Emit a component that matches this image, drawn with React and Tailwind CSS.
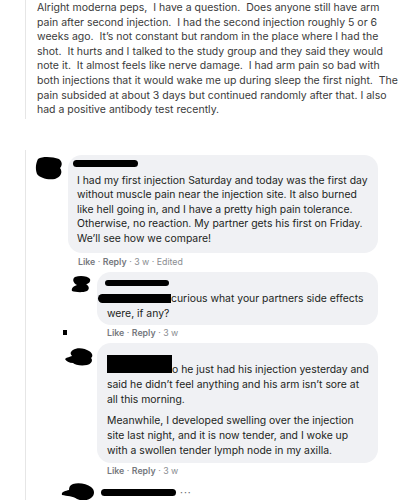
import React from "react";

const font = { fontFamily: "Inter, 'Liberation Sans', sans-serif" };

function Blob({ w, h, d }) {
  return (
    <svg width={w} height={h} viewBox={`0 0 ${w} ${h}`} className="block">
      <path d={d} fill="#000" />
    </svg>
  );
}

function Meta({ edited }) {
  return (
    <div className="text-[8.8px] leading-[12px] text-[#8a8d91] pl-[10px]">
      <span className="font-semibold text-[#75787d]">Like</span>
      <span> · </span>
      <span className="font-semibold text-[#75787d]">Reply</span>
      <span> · 3 w</span>
      {edited && <span> · Edited</span>}
    </div>
  );
}

export default function App() {
  return (
    <div className="w-[409px] h-[500px] bg-white overflow-hidden" style={font}>
      {/* post */}
      <div className="ml-[25px] border-l border-[#e6e6e6] h-[119px] pl-[11px] pt-[1px] text-[10.5px] leading-[14.6px] text-[#3a3a3a]">
        <div className="whitespace-pre">Alright moderna peps,  I have a question.  Does anyone still have arm</div>
        <div className="whitespace-pre">pain after second injection.  I had the second injection roughly 5 or 6</div>
        <div className="whitespace-pre">weeks ago.  It’s not constant but random in the place where I had the</div>
        <div className="whitespace-pre">shot.  It hurts and I talked to the study group and they said they would</div>
        <div className="whitespace-pre">note it.  It almost feels like nerve damage.  I had arm pain so bad with</div>
        <div className="whitespace-pre">both injections that it would wake me up during sleep the first night.  The</div>
        <div className="whitespace-pre">pain subsided at about 3 days but continued randomly after that. I also</div>
        <div className="whitespace-pre">had a positive antibody test recently.</div>
      </div>

      {/* comments */}
      <div className="mt-[31px] ml-[25px] border-l border-[#e6e6e6] h-[350px] pt-[5px]">
        {/* comment 1 */}
        <div className="flex">
          <div className="w-[42px] pl-[9px] pt-[1px]">
            <Blob w={28} h={24} d="M3 3 C8 0 18 1 24 3 C28 6 27 10 25 12 C28 16 26 21 20 23 C12 24 5 22 2 18 C0 12 1 7 3 3 Z" />
          </div>
          <div>
            <div className="w-[310px] bg-[#f0f1f4] rounded-[14px] pl-[9px] pr-[8px] pt-[5px] pb-[7px] text-[10.4px] leading-[14.4px] text-[#1c1e21]">
              <div className="h-[12px] flex items-start">
                <div className="ml-[-4px] w-[65px] h-[7px] bg-black rounded-full" />
              </div>
              <div className="mt-[2px]">
                <div className="whitespace-pre">I had my first injection Saturday and today was the first day</div>
                <div className="whitespace-pre">without muscle pain near the injection site. It also burned</div>
                <div className="whitespace-pre">like hell going in, and I have a pretty high pain tolerance.</div>
                <div className="whitespace-pre">Otherwise, no reaction. My partner gets his first on Friday.</div>
                <div className="whitespace-pre">We’ll see how we compare!</div>
              </div>
            </div>
            <div className="mt-[3px]">
              <Meta edited />
            </div>
          </div>
        </div>

        {/* reply 1 */}
        <div className="flex mt-[4px]">
          <div className="w-[71px] flex flex-col items-end pr-[6px] pt-[3px]">
            <Blob w={20} h={18} d="M4 2 C9 0 17 1 19 4 C20 7 17 9 15 9 C18 11 19 14 16 16 C11 18 4 17 1 16 C0 13 3 11 6 10 C2 8 1 4 4 2 Z" />
            <div className="mt-[37px] mr-[24px] w-[4px] h-[5px] bg-black" />
          </div>
          <div>
            <div className="w-[281px] bg-[#f0f1f4] rounded-[14px] pl-[10px] pr-[8px] pt-[8px] pb-[4px] text-[10.4px] leading-[15px] text-[#1c1e21]">
              <div className="ml-[-2px] w-[64px] h-[6px] bg-black rounded-full" />
              <div className="mt-[5px] flex items-center">
                <div className="ml-[-9px] w-[73px] h-[9px] bg-black rounded-l-full rounded-r-[3px]" />
                <span className="whitespace-pre">curious what your partners side effects</span>
              </div>
              <div className="whitespace-pre">were, if any?</div>
            </div>
            <div className="mt-[2px]">
              <Meta />
            </div>
          </div>
        </div>

        {/* reply 2 */}
        <div className="flex mt-[4px]">
          <div className="w-[71px] flex justify-end pr-[3px] pt-[5px]">
            <Blob w={29} h={18} d="M8 2 C12 -1 20 0 24 3 C28 5 28 9 26 10 C28 12 27 16 22 17 C16 18 10 17 8 15 C4 15 1 13 0 11 C2 9 5 9 7 8 C5 6 5 4 8 2 Z" />
          </div>
          <div>
            <div className="w-[281px] bg-[#f0f1f4] rounded-[14px] pl-[10px] pr-[8px] pt-[4px] pb-[5px] text-[10.4px] leading-[15px] text-[#1c1e21]">
              <div className="h-[8px]" />
              <div className="flex items-start">
                <div className="w-[65px] h-[18px] bg-black shrink-0" />
                <span className="whitespace-pre pt-[7px]">o he just had his injection yesterday and</span>
              </div>
              <div className="whitespace-pre">said he didn’t feel anything and his arm isn’t sore at</div>
              <div className="whitespace-pre">all this morning.</div>
              <div className="mt-[6px]">
                <div className="whitespace-pre">Meanwhile, I developed swelling over the injection</div>
                <div className="whitespace-pre">site last night, and it is now tender, and I woke up</div>
                <div className="whitespace-pre">with a swollen tender lymph node in my axilla.</div>
              </div>
            </div>
            <div className="mt-[2px]">
              <Meta />
            </div>
          </div>
        </div>

        {/* reply 3 (cut) */}
        <div className="flex mt-[6px] items-start">
          <div className="w-[71px] flex justify-end pr-[2px]">
            <Blob w={34} h={18} d="M12 1 C18 -1 26 1 30 4 C34 7 34 12 30 15 C26 18 20 18 16 16 C12 13 6 13 1 12 C0 9 4 8 8 7 C8 4 9 2 12 1 Z" />
          </div>
          <div className="flex items-center pt-[5px]">
            <div className="ml-[4px] w-[75px] h-[7px] bg-black rounded-full" />
            <span className="ml-[4px] text-[10px] leading-[8px] text-[#65676b] tracking-[1px]">···</span>
          </div>
        </div>
      </div>
    </div>
  );
}
